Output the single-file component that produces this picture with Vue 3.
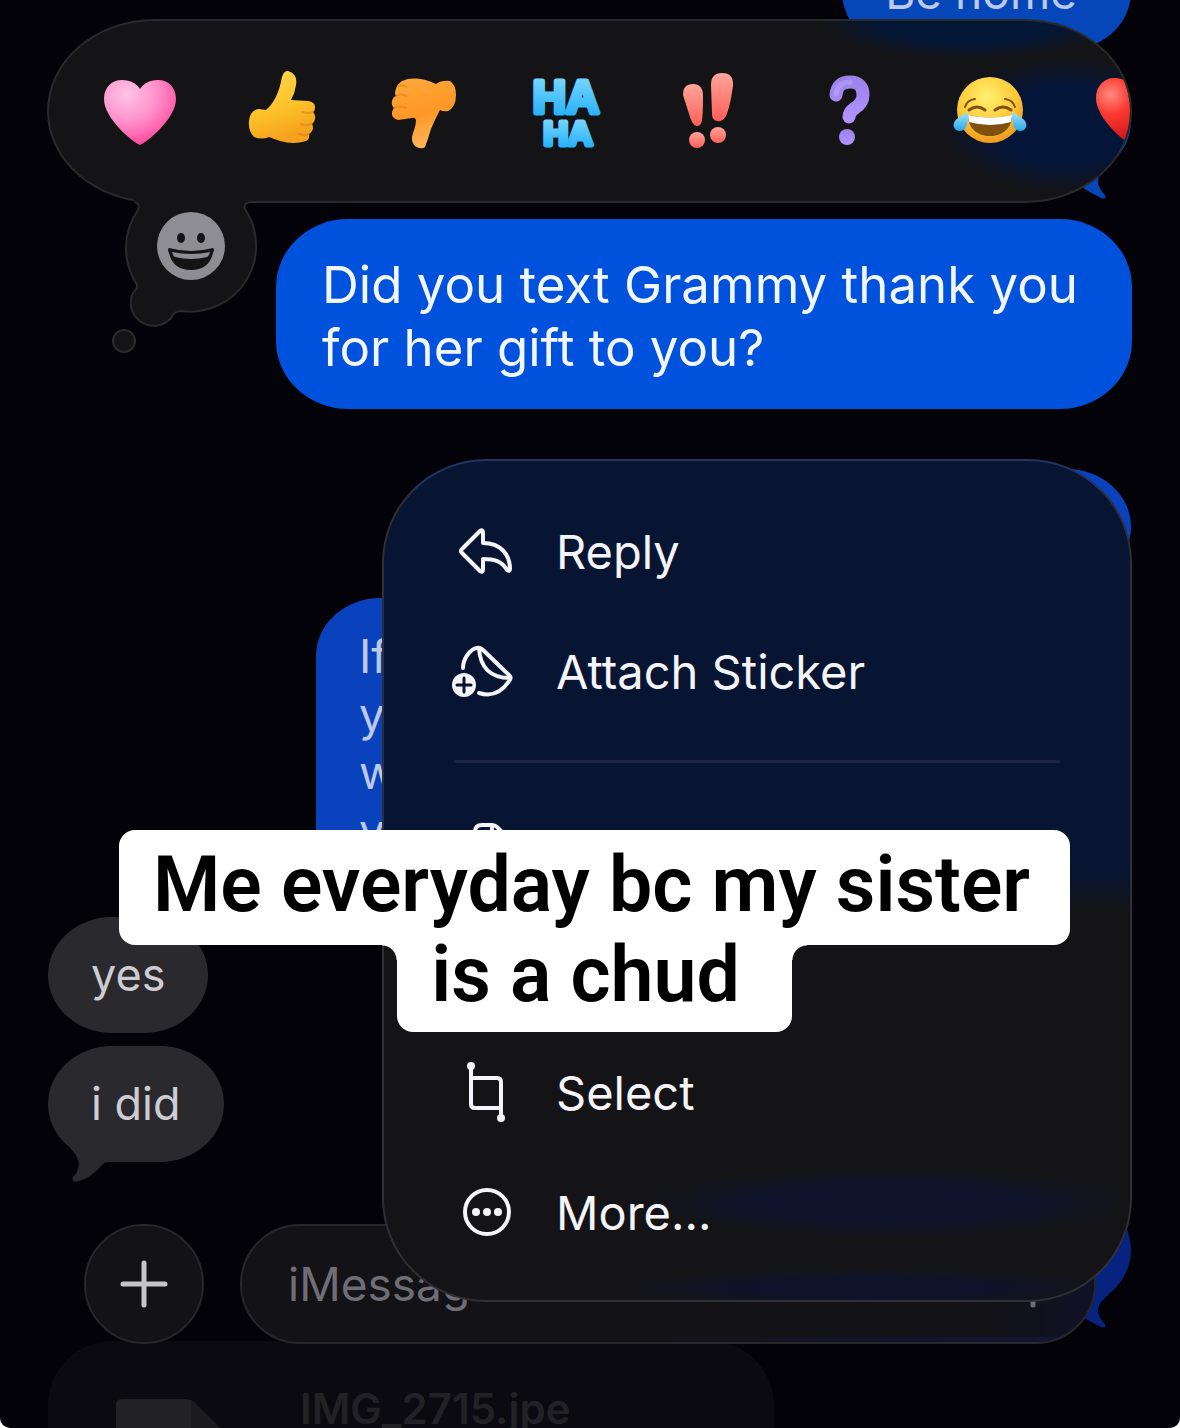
<script setup>
import { ref } from 'vue'

const draft = ref('')
const reactions = ['heart', 'like', 'dislike', 'haha', 'emphasis', 'question', 'joy', 'red heart']
const menuItems = ref([
  { id: 'reply', label: 'Reply' },
  { id: 'sticker', label: 'Attach Sticker' },
  { id: 'copy', label: '' },
  { id: 'select', label: 'Select' },
  { id: 'more', label: 'More...' }
])
const caption = ['Me everyday bc my sister', 'is a chud']
const longMessage = ['If', 'y', 'w', 'y']

const selected = ref(null)
const react = (name) => {
  selected.value = name
}
</script>

<template>
  <main class="screen">
    <!-- conversation -->
    <section class="layer thread">
      <div class="bubble sent first">Be home</div>
      <div class="bubble sent second">
        <svg class="tail right" viewBox="0 0 40 34"><path d="M-4 0 V14 H2 Q8 22 30 33 Q36 35 34 30 C28 24 24 16 30 8 L38 0 Z" /></svg>
      </div>
      <div class="bubble sent third"></div>
      <div class="bubble sent long">
        <p v-for="(line, i) in longMessage" :key="i">{{ line }}</p>
      </div>
      <div class="bubble received yes">yes</div>
      <div class="bubble received">
        i did
        <svg class="tail left" viewBox="0 0 40 34"><path d="M4 0 C12 8 14 14 12 21 Q11 25 7 29 Q5 33 9 34 C20 32 28 26 36 17 Q38 14 44 14 L44 0 Z" /></svg>
      </div>
      <div class="bubble sent last">
        <svg class="tail right" viewBox="0 0 40 34"><path d="M-4 0 V14 H2 Q8 22 30 33 Q36 35 34 30 C28 24 24 16 30 8 L38 0 Z" /></svg>
      </div>
      <div class="file">
        <svg class="doc" viewBox="0 0 104 60"><path d="M0 60 V6 Q0 0 6 0 H70 Q74 0 78 3 L104 29 V60 Z" fill="#222126" /><path d="M75 1 L104 29 V60 H75 Z" fill="#1c1b20" /></svg>
        <span>IMG_2715.jpe</span>
      </div>
    </section>

    <!-- composer -->
    <form class="layer composer" @submit.prevent>
      <button type="button" class="plus" aria-label="Add">
        <svg viewBox="0 0 48 48"><path d="M24 3 V45 M3 24 H45" /></svg>
      </button>
      <label class="field">
        <input v-model="draft" type="text" placeholder="iMessage" aria-label="iMessage" />
        <svg class="mic" viewBox="0 0 30 48"><path d="M15 34 V45 M3 20 Q3 34 15 34 Q27 34 27 20" /></svg>
      </label>
    </form>

    <!-- lifted message -->
    <section class="layer overlay">
      <div class="reactions">
        <div class="bar">
          <button v-for="name in reactions" :key="name" type="button" :aria-label="name" @click="react(name)">
            <svg v-if="name === 'heart'" viewBox="0 0 76 84">
              <defs>
                <radialGradient id="pink" cx=".32" cy=".22" r=".85"><stop offset="0" stop-color="#ffc4e6" /><stop offset=".5" stop-color="#ff90cb" /><stop offset="1" stop-color="#ff3f96" /></radialGradient>
              </defs>
              <path fill="url(#pink)" d="M38 76 C32 74 2 50 2 30 C2 18 10 11 20 11 C29 11 35 15 38 20 C41 15 47 11 56 11 C66 11 74 18 74 30 C74 50 44 74 38 76 Z" />
            </svg>
            <svg v-else-if="name === 'like'" viewBox="0 0 76 84">
              <defs>
                <linearGradient id="yellow" x1="0" y1="0" x2=".3" y2="1"><stop offset="0" stop-color="#ffd650" /><stop offset=".6" stop-color="#fdc22b" /><stop offset="1" stop-color="#f5a21c" /></linearGradient>
              </defs>
              <path fill="url(#yellow)" d="M22 41 C30 34 35 24 38 8 Q40 1 44 2 Q54 5 52 16 Q51 24 47 31 L64 32 Q71 33 71 38 Q71 42 69 43 Q72 46 71 50 Q70 54 68 55 Q70 59 68 62 Q67 64 65 65 Q66 70 62 72 Q50 76 36 72 Q30 70 25 68 Q18 71 10 68 Q4 62 5 52 Q6 41 15 40 Z" />
              <path class="crease" d="M69 43 Q64 45 58 43 M68 55 Q63 57 57 55 M65 65 Q60 67 55 65" />
            </svg>
            <svg v-else-if="name === 'dislike'" viewBox="0 0 76 84">
              <defs>
                <linearGradient id="orange" x1="0" y1="0" x2=".3" y2="1"><stop offset="0" stop-color="#ffa93c" /><stop offset=".6" stop-color="#ff9826" /><stop offset="1" stop-color="#ffb254" /></linearGradient>
              </defs>
              <path fill="url(#orange)" d="M16 12 Q30 6 50 15 Q56 11 64 12 Q70 16 70 26 Q70 38 62 42 Q58 43 54 41 Q49 50 45 60 Q42 70 39 78 Q35 81 29 77 Q24 72 27 64 Q30 56 30 51 Q29 48 26 49 L12 51 Q5 49 6 43 Q7 40 8 39 Q5 36 6 32 Q7 28 10 27 Q8 24 10 20 Q11 15 16 12 Z" />
              <path class="crease" d="M10 27 Q15 24 20 27 M8 39 Q14 36 20 39 M12 17 Q16 15 20 18" />
            </svg>
            <svg v-else-if="name === 'haha'" viewBox="0 0 76 84">
              <defs>
                <linearGradient id="sky" x1="0" y1="0" x2="0" y2="1"><stop offset="0" stop-color="#86dcff" /><stop offset="1" stop-color="#18aaf8" /></linearGradient>
              </defs>
              <text class="ha" x="38" y="44" font-size="46">HA</text>
              <text class="ha" x="40" y="76" font-size="34">HA</text>
            </svg>
            <svg v-else-if="name === 'emphasis'" viewBox="0 0 76 84">
              <defs>
                <linearGradient id="coral" x1="0" y1="0" x2="0" y2="1"><stop offset="0" stop-color="#ffa59a" /><stop offset="1" stop-color="#ff5f58" /></linearGradient>
              </defs>
              <g fill="url(#coral)">
                <path d="M13 26 Q13 15 23 15 Q33 15 33 27 Q33 45 32 51 Q31 57 27 57 Q23 57 20 48 Z" />
                <path d="M41 16 Q41 4 52 4 Q64 4 63 17 Q60 38 56 47 Q53 53 47 52 Q42 51 42 45 Z" />
                <circle cx="27" cy="71" r="8" />
                <circle cx="48" cy="66" r="8" />
              </g>
            </svg>
            <svg v-else-if="name === 'question'" viewBox="0 0 76 84">
              <defs>
                <linearGradient id="violet" x1="0" y1="0" x2="0" y2="1"><stop offset="0" stop-color="#9c82ea" /><stop offset="1" stop-color="#b093ff" /></linearGradient>
              </defs>
              <path fill="none" stroke="url(#violet)" stroke-width="13" stroke-linecap="round" d="M24 26 Q25 13 38 13 Q51 13 51 26 Q51 34 43 39 Q37 43 37 48" />
              <path fill="none" stroke="#c9b4ff" stroke-opacity=".4" stroke-width="5" stroke-linecap="round" d="M24 25 Q26 13 38 13" />
              <circle fill="url(#violet)" cx="35" cy="68" r="8" />
            </svg>
            <svg v-else-if="name === 'joy'" viewBox="0 0 76 84">
              <defs>
                <radialGradient id="face" cx=".45" cy=".3" r=".72"><stop offset="0" stop-color="#fff070" /><stop offset=".6" stop-color="#fdc935" /><stop offset="1" stop-color="#ee951c" /></radialGradient>
                <linearGradient id="tear" x1="0" y1="0" x2="0" y2="1"><stop offset="0" stop-color="#9be6ff" /><stop offset="1" stop-color="#2aa6e6" /></linearGradient>
              </defs>
              <circle cx="36" cy="41" r="33" fill="url(#face)" />
              <path d="M14 46 Q36 51 58 46 C58 60 48 67 36 67 C24 67 14 60 14 46 Z" fill="#80500f" />
              <path d="M14 46 Q36 51 58 46 L57 53 Q36 59 15 53 Z" fill="#fff" />
              <path d="M15 41 Q23 35 31 41 M41 41 Q49 35 57 41" fill="none" stroke="#80500f" stroke-width="3" stroke-linecap="round" />
              <path d="M11 38 Q13 31 21 30 M61 38 Q59 31 51 30" fill="none" stroke="#80500f" stroke-width="2" stroke-linecap="round" />
              <path d="M14 43 C14 50 14 62 6 62 C0 62 -2 56 1 52 C4 48 10 46 14 43 Z M58 43 C58 50 58 62 66 62 C72 62 74 56 71 52 C68 48 62 46 58 43 Z" fill="url(#tear)" />
            </svg>
            <svg v-else viewBox="0 0 76 84">
              <defs>
                <radialGradient id="red" cx=".2" cy=".25" r=".8"><stop offset="0" stop-color="#ff8a80" /><stop offset=".35" stop-color="#fb3b32" /><stop offset="1" stop-color="#c90c10" /></radialGradient>
              </defs>
              <path fill="url(#red)" d="M36 76 C30 74 0 50 0 29 C0 17 8 9 18 9 C27 9 33 13 36 18 C39 13 45 9 54 9 C64 9 72 17 72 29 C72 50 42 74 36 76 Z" />
            </svg>
          </button>
        </div>
        <svg class="thought" viewBox="100 196 165 165">
          <path d="M134 197 V201 Q141 203 138 210 A66 66 0 0 0 136 283 Q139 288 134 291 A23 23 0 0 0 171 318 Q174 311 181 311 A66 66 0 0 0 245 209 Q243 203 250 202 V197 Z" fill="#141416" />
          <path d="M134 202 Q141 203 138 210 A66 66 0 0 0 136 283 Q139 288 134 291 A23 23 0 0 0 171 318 Q174 311 181 311 A66 66 0 0 0 245 209 Q243 203 250 202" class="edge" />
          <circle cx="124" cy="341" r="11" fill="#141416" class="edge" />
          <circle cx="191" cy="246" r="34" fill="#8e8d93" />
          <ellipse cx="181" cy="238" rx="4" ry="5" fill="#141416" />
          <ellipse cx="201" cy="238" rx="4" ry="5" fill="#141416" />
          <path d="M169 248 Q191 254 213 248 Q215 249 213 253 Q209 270 191 270 Q173 270 169 253 Q167 249 169 248 Z" fill="#141416" />
          <path d="M172 252 Q191 256 210 252 Q209 256 207 257 Q191 261 175 257 Q173 256 172 252 Z" fill="#8e8d93" />
        </svg>
      </div>

      <p class="focused">Did you text Grammy thank you for her gift to you?</p>

      <menu class="menu">
        <li v-for="item in menuItems" :key="item.id" :class="item.id">
          <button type="button" :aria-label="item.label || item.id">
            <svg viewBox="0 0 64 64">
              <path v-if="item.id === 'reply'" d="M10 30 L28 12 Q31 10 31 14 V24 C49 24 58 36 58 50 Q58 53 55 51 C50 42 42 40 31 40 V50 Q31 54 28 52 L10 34 Q8 32 10 30 Z" />
              <g v-else-if="item.id === 'sticker'">
                <path d="M11 29 C11 20 18 10 25 9 Q28 8 31 11 L57 36 Q60 39 57 42 C50 53 40 58 27 54 M27 9 C28 28 38 39 58 39" />
                <circle cx="12" cy="46" r="12" fill="#f4f4fa" stroke="none" />
                <path d="M12 39 V53 M5 46 H19" stroke="#071531" stroke-width="3" />
              </g>
              <path v-else-if="item.id === 'copy'" d="M23 50 V12 Q23 5 30 5 H40 Q43 5 45 7 L56 18 V44 M40 5 V14 Q40 18 44 18 H56" />
              <g v-else-if="item.id === 'select'">
                <path d="M19 5 V44 Q19 48 23 48 H49 M19 18 H45 Q49 18 49 22 V58" />
                <circle cx="19" cy="6" r="4" fill="#f4f4fa" stroke="none" />
                <circle cx="49" cy="58" r="4" fill="#f4f4fa" stroke="none" />
              </g>
              <g v-else>
                <circle cx="35" cy="32" r="22" />
                <g fill="#f4f4fa" stroke="none"><circle cx="24" cy="32" r="4" /><circle cx="35" cy="32" r="4" /><circle cx="46" cy="32" r="4" /></g>
              </g>
            </svg>
            <span>{{ item.label }}</span>
          </button>
        </li>
      </menu>
    </section>

    <!-- video caption -->
    <h1 class="layer caption">
      <span v-for="line in caption" :key="line">{{ line }}</span>
    </h1>
  </main>
</template>

<style>
html,
body {
  background: #fff;
}
</style>

<style scoped>
.screen {
  display: grid;
  grid-template-columns: minmax(0, 1fr);
  grid-template-rows: minmax(0, 1fr);
  height: 100vh;
  overflow: hidden;
  background: #030208;
  border-radius: 0 0 10px 10px;
  font-family: Inter, 'Liberation Sans', sans-serif;
}
.layer {
  grid-area: 1 / 1;
  box-sizing: border-box;
}
button {
  border: 0;
  padding: 0;
  background: none;
  font: inherit;
  color: inherit;
  cursor: pointer;
}
svg {
  display: block;
  flex: none;
}
p {
  margin: 0;
}

/* conversation */
.thread {
  z-index: 0;
  display: flex;
  flex-direction: column;
  gap: 13px;
  padding: 0 49px 0 48px;
}
.bubble {
  position: relative;
  flex: none;
  box-sizing: border-box;
  min-height: 116px;
  padding: 29px 43px;
  border-radius: 64px / 58px;
  font-size: 46px;
  line-height: 58px;
}
.sent {
  align-self: flex-end;
  background: #0a42bd;
  color: #bcc9ea;
}
.received {
  align-self: flex-start;
  background: #2a292e;
  color: #cdccd2;
  font-size: 45px;
}
.first {
  margin-top: -66px;
  padding-right: 54px;
  background: #0547b8;
}
.second {
  width: 16%;
  background: #0547b8;
  margin-bottom: 277px;
}
.third {
  width: 64%;
}
.long {
  width: calc(100% - 268px);
  margin-bottom: 16px;
}
.last {
  width: 45%;
  margin: 17px 0 20px;
  background: #07237f;
}
.tail {
  position: absolute;
  bottom: -20px;
  width: 40px;
  height: 34px;
  overflow: visible;
}
.tail.left {
  left: 18px;
  fill: #2a292e;
}
.tail.right {
  right: 20px;
  fill: #07237f;
}
.second .tail {
  fill: #0547b8;
}
.file {
  display: flex;
  gap: 80px;
  box-sizing: border-box;
  width: 67%;
  flex: 1 0 87px;
  padding: 44px 68px 0;
  border-radius: 64px 64px 0 0;
  background: #0b0a10;
  color: #222126;
  font-size: 42px;
  font-weight: 600;
  line-height: 48px;
}
.doc {
  width: 104px;
  height: 60px;
  margin-top: 14px;
}

/* composer */
.composer {
  z-index: 1;
  align-self: end;
  display: flex;
  gap: 36px;
  padding: 0 84px;
  margin-bottom: 84px;
}
.plus,
.field {
  display: flex;
  align-items: center;
  box-sizing: border-box;
  height: 120px;
  border: 2px solid #27262b;
  border-radius: 60px;
  background: #131217;
}
.plus {
  justify-content: center;
  width: 120px;
}
.plus svg {
  width: 48px;
  height: 48px;
  fill: none;
  stroke: #c5c4ca;
  stroke-width: 5;
  stroke-linecap: round;
}
.field {
  flex: 1;
  min-width: 0;
  padding: 0 46px;
  background: linear-gradient(90deg, transparent 45%, #131534 95%) bottom / 100% 5px no-repeat, linear-gradient(90deg, #131217 88%, #101126);
}
.field input {
  flex: 1;
  min-width: 0;
  border: 0;
  padding: 0;
  outline: 0;
  background: none;
  color: #cdccd2;
  font: inherit;
  font-size: 46px;
}
.field input::placeholder {
  color: #6f6e76;
  opacity: 1;
}
.mic {
  width: 30px;
  height: 48px;
  fill: none;
  stroke: #6f6e76;
  stroke-width: 5;
  stroke-linecap: round;
}

/* reactions */
.overlay {
  z-index: 2;
  display: flex;
  flex-direction: column;
  align-items: flex-end;
  padding: 19px 48px 0 47px;
}
.reactions {
  position: relative;
  width: 100%;
}
.bar {
  display: flex;
  align-items: center;
  gap: 66px;
  box-sizing: border-box;
  height: 184px;
  padding-left: 53px;
  border: 2px solid #2a2a2d;
  border-radius: 108px / 92px;
  overflow: hidden;
  background:
    radial-gradient(closest-side, #04153a 55%, transparent) right -60px top 36px / 250px 136px no-repeat,
    radial-gradient(closest-side, #051736 60%, transparent) right 10px top -38px / 300px 76px no-repeat,
    #141416;
}
.bar button,
.bar svg {
  flex: none;
  width: 76px;
  height: 84px;
}
.bar svg {
  overflow: visible;
}
.crease {
  fill: none;
  stroke: #d87d14;
  stroke-opacity: 0.5;
  stroke-width: 2;
  stroke-linecap: round;
}
.ha {
  font-family: 'Liberation Sans', sans-serif;
  font-weight: 700;
  text-anchor: middle;
  fill: url(#sky);
  stroke: url(#sky);
  stroke-width: 5;
  stroke-linejoin: round;
}
.thought {
  position: absolute;
  left: 53px;
  top: 177px;
  width: 165px;
  height: 165px;
}
.edge {
  stroke: #2a2a2d;
  stroke-width: 2;
}
path.edge {
  fill: none;
}

.focused {
  box-sizing: border-box;
  width: 79%;
  max-width: 856px;
  margin: 16px 0 50px;
  padding: 34px 46px 30px;
  border-radius: 72px / 68px;
  background: #0051dc;
  color: #f2f6ff;
  font-size: 51px;
  line-height: 63px;
}

/* context menu */
.menu {
  box-sizing: border-box;
  width: 70%;
  max-width: 750px;
  margin: 0;
  padding: 30px 68px 28px;
  border: 2px solid #2f2f35;
  border-top-color: #213464;
  border-radius: 104px;
  list-style: none;
  background:
    radial-gradient(closest-side, #0e132b 50%, transparent) right -10px bottom 62px / 500px 70px no-repeat,
    radial-gradient(closest-side, #0e122b 40%, transparent) right 0 bottom -8px / 520px 40px no-repeat,
    linear-gradient(#071532 410px, #141416 450px);
  color: #f4f4fa;
  font-size: 47px;
}
.menu button {
  display: flex;
  align-items: center;
  gap: 40px;
  width: 100%;
  height: 120px;
  text-align: left;
}
.menu svg {
  width: 64px;
  height: 64px;
  fill: none;
  stroke: #f4f4fa;
  stroke-width: 4;
  stroke-linecap: round;
  stroke-linejoin: round;
}
.menu .sticker::after {
  content: '';
  display: block;
  height: 3px;
  margin: 29px 2px;
  background: #1d2543;
}
.menu .select {
  margin-top: 120px;
}

/* caption */
.caption {
  z-index: 3;
  display: flex;
  flex-direction: column;
  align-items: center;
  justify-self: center;
  align-self: start;
  margin: 830px 0 0 9px;
  color: #000;
  font-family: Roboto, sans-serif;
  font-size: 77px;
  font-weight: 600;
  line-height: 92px;
}
.caption span {
  position: relative;
  padding: 9px 40px 14px 34px;
  border-radius: 16px;
  background: #fff;
}
.caption span + span {
  padding: 0 52px 26px 34px;
  line-height: 61px;
  border-radius: 0 0 16px 16px;
}
.caption span + span::before,
.caption span + span::after {
  content: '';
  position: absolute;
  top: 0;
  width: 15px;
  height: 15px;
}
.caption span + span::before {
  right: 100%;
  background: radial-gradient(circle at 0 100%, transparent 14px, #fff 15px);
}
.caption span + span::after {
  left: 100%;
  background: radial-gradient(circle at 100% 100%, transparent 14px, #fff 15px);
}
</style>
